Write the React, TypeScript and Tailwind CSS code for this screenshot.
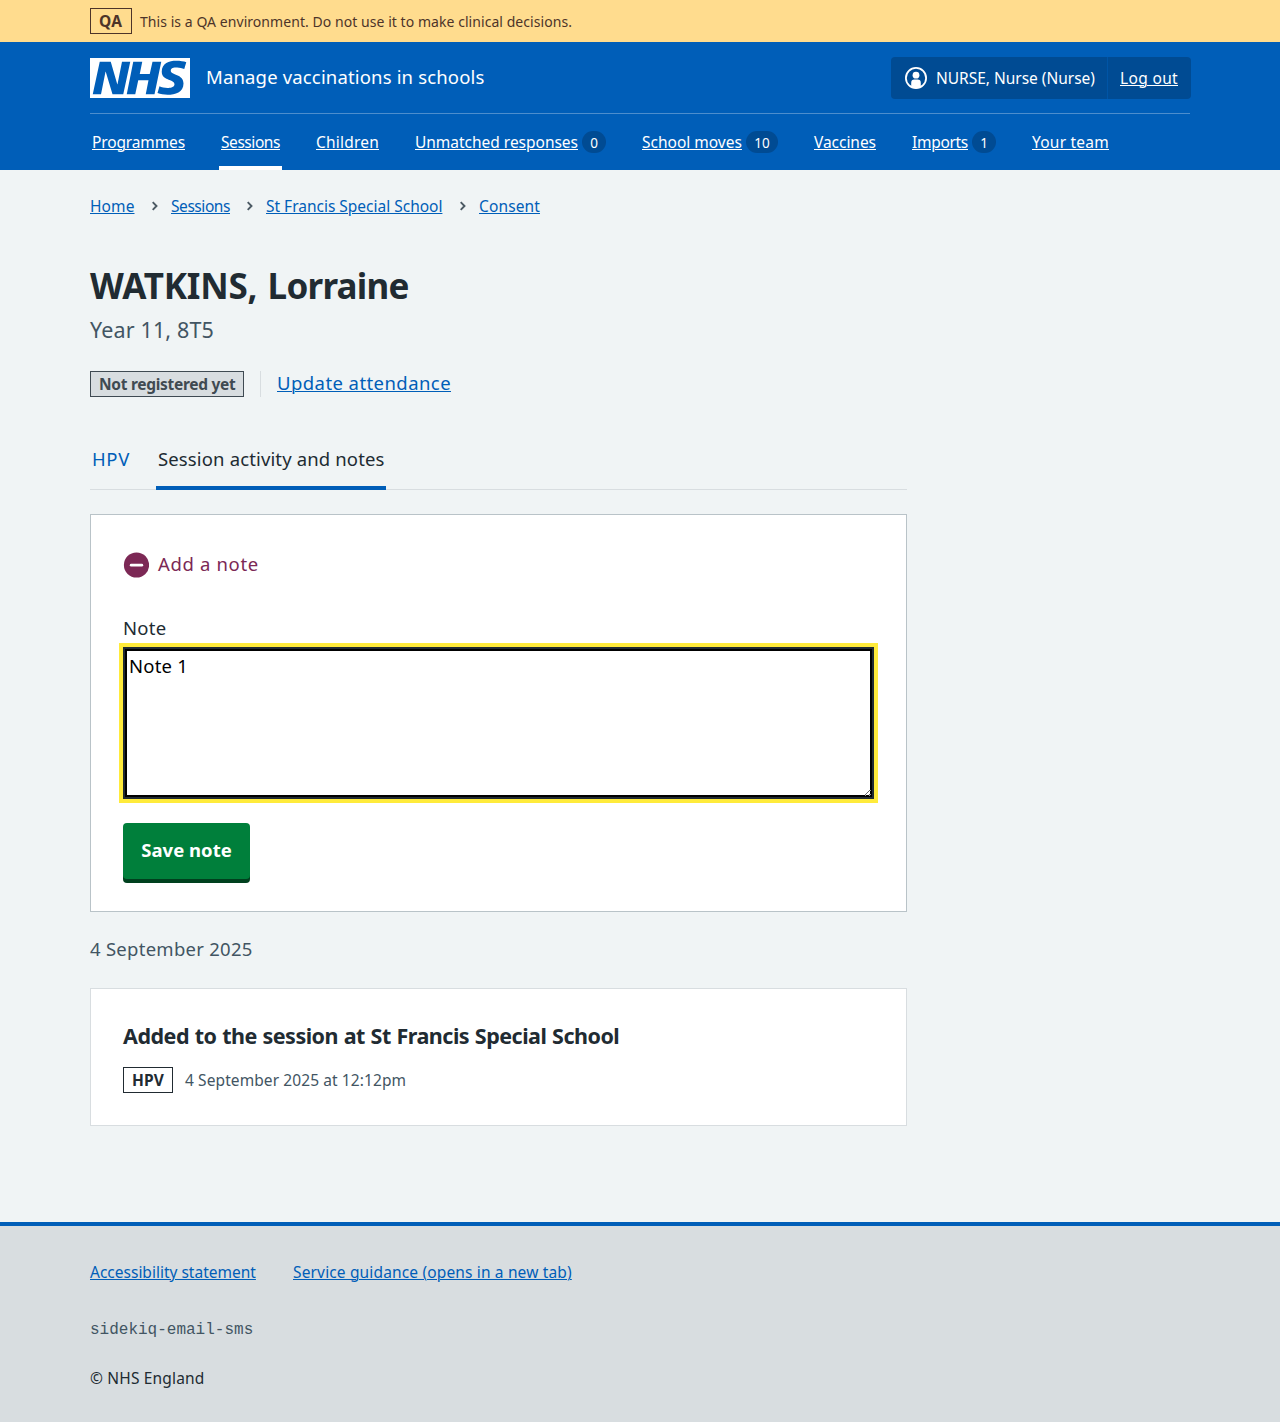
import type { ReactNode } from "react";

const navItems: { label: string; box: string; badge?: string; badgeBox?: string; active?: boolean }[] = [
  { label: "Programmes", box: "w-[93px] tracking-[-0.133px]" },
  { label: "Sessions", box: "w-[59px] tracking-[-0.436px]", active: true },
  { label: "Children", box: "w-[63px] tracking-[0.209px]" },
  { label: "Unmatched responses", box: "w-[163px] tracking-[-0.019px]", badge: "0", badgeBox: "w-6" },
  { label: "School moves", box: "w-[100px]", badge: "10", badgeBox: "w-8" },
  { label: "Vaccines", box: "w-[62px] tracking-[-0.039px]" },
  { label: "Imports", box: "w-[56px] tracking-[-0.299px]", badge: "1", badgeBox: "w-6" },
  { label: "Your team", box: "w-[77px] tracking-[0.231px]" },
];

const crumbs = [
  { label: "Home", box: "w-[45px] tracking-[0.098px]" },
  { label: "Sessions", box: "w-[59px] tracking-[-0.436px]" },
  { label: "St Francis Special School", box: "w-[177px] tracking-[-0.01px]" },
  { label: "Consent", box: "w-[61px] tracking-[0.127px]" },
];

function NhsLogo() {
  return (
    <svg viewBox="0 0 200 80" className="h-10 w-[100px] shrink-0 text-white" aria-label="NHS">
      <path
        fill="currentColor"
        d="M200 0v80H0V0h200Zm-27.500 5.500c-14.500 0-29 5-29 22 0 10.200 7.700 13.500 14.700 16.300l.7.3c5.400 2 10.100 3.900 10.100 8.400 0 6.500-8.500 7.500-14 7.500s-12.500-1.500-16-3.500L135 70c5.500 2 13.500 3.500 20 3.500 15.500 0 32-4.500 32-22.500 0-19.500-25.500-16.500-25.500-25.500 0-5.500 5.500-6.500 12.500-6.500a35 35 0 0 1 14.500 3l4-13.500c-4.500-2-12-3-20-3Zm-131 2h-22l-14 65H22l9-45h.5l13.500 45h21.500l14-65H64l-9 45h-.5l-13-45Zm63 0h-18l-13 65h17l6-28H117l-5.500 28H129l13.500-65H125L119.500 32h-20l5-24.500Z"
      />
    </svg>
  );
}

function UserIcon() {
  return (
    <svg viewBox="0 0 22 22" className="size-[22px] shrink-0" aria-hidden="true">
      <circle cx="11" cy="11" r="10.1" fill="none" stroke="#fff" strokeWidth="1.8" />
      <circle cx="11" cy="8.2" r="3.4" fill="#fff" />
      <path d="M6.200 20v-4.200a3.200 3.200 0 0 1 3.200-3.200h3.200a3.200 3.200 0 0 1 3.200 3.200V20a10 10 0 0 1-9.600 0Z" fill="#fff" />
    </svg>
  );
}

function Chevron() {
  return (
    <svg viewBox="0 0 6 10" className="mb-px ml-[17px] mr-[13px] h-[10px] w-[6px] shrink-0" aria-hidden="true">
      <path d="M.7 1.200 4.500 5 .7 8.800" fill="none" stroke="#4c5a64" strokeWidth="1.900" />
    </svg>
  );
}

function Tag({ className, children }: { className: string; children: ReactNode }) {
  return (
    <strong className={`flex h-[26px] shrink-0 items-center border px-2 text-[15.5px] font-bold leading-6 ${className}`}>
      {children}
    </strong>
  );
}

const link = "shrink-0 underline decoration-1 underline-offset-1";

export default function App() {
  return (
    <div className="flex min-h-[1422px] flex-col whitespace-nowrap bg-[#f0f4f5] font-['Noto_Sans',sans-serif] text-[15.5px] leading-6 text-[#212b32]">
      <div className="h-[42px] bg-[#ffdc8e] text-[#4d3429]">
        <div className="mx-auto flex h-full w-[1100px] items-center">
          <Tag className="w-[42px] border-[#4d3429] tracking-[0.3px]">QA</Tag>
          <span className="ml-2 mt-px text-[14px] tracking-[0.055px]">
            This is a QA environment. Do not use it to make clinical decisions.
          </span>
        </div>
      </div>

      <header className="h-32 bg-[#005eb8] text-white">
        <div className="mx-auto w-[1100px]">
          <div className="flex h-[72px] items-center border-b border-[#4d8ecd]">
            <NhsLogo />
            <span className="mb-0.5 ml-4 text-[18.5px] tracking-[0.16px]">Manage vaccinations in schools</span>
            <div className="-mr-px ml-auto flex h-[42px] w-[300px] rounded bg-[#004b93]">
              <div className="flex w-[217px] items-center border-r border-[#0055a6] pl-[14px]">
                <UserIcon />
                <span className="ml-[9px] tracking-[-0.013px]">NURSE, Nurse (Nurse)</span>
              </div>
              <a className={`${link} self-center pl-3 tracking-[0.339px]`}>Log out</a>
            </div>
          </div>
          <nav className="flex h-14 gap-8">
            {navItems.map((n) => (
              <div
                key={n.label}
                className={`flex items-center border-b-4 px-0.5 pt-1 ${n.active ? "border-white" : "border-transparent"}`}
              >
                <a className={`${link} ${n.box}`}>{n.label}</a>
                {n.badge && (
                  <span
                    className={`ml-1 flex h-[22px] items-center justify-center rounded-full bg-[#004b93] pt-px text-[13.5px] ${n.badgeBox}`}
                  >
                    {n.badge}
                  </span>
                )}
              </div>
            ))}
          </nav>
        </div>
      </header>

      <main className="mx-auto w-[1100px] flex-1">
        <nav className="mt-6 flex items-center text-[#005eb8]">
          {crumbs.map((c, i) => (
            <div key={c.label} className="flex items-center">
              {i > 0 && <Chevron />}
              <a className={`${link} ${c.box}`}>{c.label}</a>
            </div>
          ))}
        </nav>

        <div className="w-[817px]">
          <h1 className="mt-11 text-[35px] font-bold leading-[48px] tracking-[-0.75px] [word-spacing:2px]">
            <span className="tracking-[-0.22px]">WATKINS,</span> Lorraine
          </h1>
          <p className="mt-1 text-[21.5px] leading-8 tracking-[0.146px] text-[#425563]">Year 11, 8T5</p>

          <div className="mt-[25px] flex h-[26px] items-center">
            <Tag className="w-[154px] border-[#3f4a52] bg-[#d8dde0] tracking-[-0.29px] text-[#3f4a52]">
              Not registered yet
            </Tag>
            <div className="ml-4 h-full border-l border-[#d8dde0] pl-4">
              <a className={`${link} text-[18.5px] tracking-[0.43px] text-[#005eb8]`}>Update attendance</a>
            </div>
          </div>

          <div className="mt-8 flex h-[61px] gap-6 border-b border-[#d8dde0] text-[18.5px]">
            <a className="flex w-[42px] items-center px-0.5 tracking-[0.661px] text-[#005eb8]">HPV</a>
            <a className="-mb-px flex w-[230px] items-center border-b-4 border-[#005eb8] px-0.5 pt-0.5 tracking-[0.14px]">
              Session activity and notes
            </a>
          </div>

          <section className="mt-6 h-[398px] border border-[#b9c3c8] bg-white px-8 pt-9">
            <div className="flex h-7 items-center text-[#7c2855]">
              <svg viewBox="0 0 26 26" className="size-[26px]" aria-hidden="true">
                <circle cx="13.5" cy="13" r="12.600" fill="#7c2855" />
                <path d="M8.200 13.200h10.600" stroke="#fff" strokeWidth="2.800" strokeLinecap="round" />
              </svg>
              <span className="mb-0.5 ml-[9px] text-[18.5px] tracking-[0.65px]">Add a note</span>
            </div>
            <label htmlFor="note" className="mt-[35px] block text-[18.5px] leading-7 tracking-[0.3px]">
              Note
            </label>
            <textarea
              id="note"
              defaultValue="Note 1"
              className="mt-[5px] block h-[152px] w-[751px] border-2 border-[#212b32] bg-white px-1 py-[3px] text-[18.5px] leading-7 tracking-[0.23px] text-black shadow-[inset_0_0_0_2px_#000] outline-4 outline-[#ffeb3b]"
            />
            <button className="mt-6 block h-14 w-[127px] rounded bg-[#007f3b] pb-0.5 text-[18.5px] font-bold tracking-[0.016px] text-white shadow-[0_4px_0_#00401e]">
              Save note
            </button>
          </section>

          <h2 className="mt-[23px] text-[18.5px] leading-7 tracking-[0.27px] text-[#425563]">4 September 2025</h2>

          <section className="mt-[25px] h-[138px] border border-[#d8dde0] bg-white px-8 pt-[31px]">
            <h3 className="text-[21.5px] font-bold leading-8 tracking-[-0.5px] [word-spacing:0.6px]">
              Added to the session at St Francis Special School
            </h3>
            <div className="mt-[15px] flex items-center text-[#425563]">
              <Tag className="w-[50px] border-[#212b32] tracking-[0.146px] text-[#212b32]">HPV</Tag>
              <span className="ml-3 tracking-[0.09px]">4 September 2025 at 12:12pm</span>
            </div>
          </section>
        </div>
      </main>

      <footer className="h-[200px] border-t-4 border-[#005eb8] bg-[#d8dde0]">
        <div className="mx-auto w-[1100px] pt-[34px]">
          <div className="flex text-[#005eb8]">
            <a className={`${link} w-[166px]`}>Accessibility statement</a>
            <a className={`${link} ml-[37px] tracking-[0.15px]`}>Service guidance (opens in a new tab)</a>
          </div>
          <p className="mt-[34px] font-['Liberation_Mono',monospace] text-base leading-6 text-[#425563]">
            sidekiq-email-sms
          </p>
          <p className="mt-6 tracking-[0.171px]">© NHS England</p>
        </div>
      </footer>
    </div>
  );
}
